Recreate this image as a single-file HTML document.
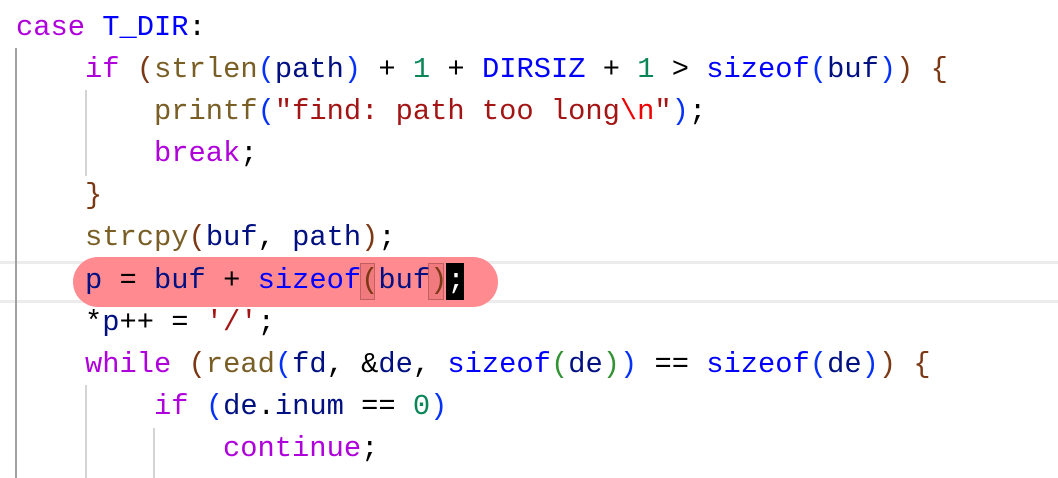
<!DOCTYPE html>
<html><head><meta charset="utf-8"><style>
html,body{margin:0;padding:0;background:#fff;width:1058px;height:478px;overflow:hidden;position:relative}
.l{position:absolute;left:16px;white-space:pre;font-family:"Liberation Mono",monospace;font-size:28.75px;line-height:42px;height:42px;color:#000;margin-top:2px}
.k{color:#af00db}.m{color:#0000ff}.f{color:#795e26}.v{color:#001080}.n{color:#098658}.s{color:#a31515}.e{color:#ee0000}
.b1{color:#7b3814}.b2{color:#0431fa}.b3{color:#319331}
.g{position:absolute;width:2px}
</style></head><body>
<div style="position:absolute;left:0;top:261px;width:1058px;height:3px;background:#ececec"></div>
<div style="position:absolute;left:0;top:300px;width:1058px;height:3px;background:#ececec"></div>
<div style="position:absolute;left:73px;top:257px;width:425px;height:50px;border-radius:25px;background:#ff8a90"></div>
<div style="position:absolute;left:360px;top:263px;width:15px;height:37px;border:1px solid #c06060;box-sizing:border-box;background:#f07a7e"></div>
<div style="position:absolute;left:428px;top:263px;width:16px;height:37px;border:1px solid #c06060;box-sizing:border-box;background:#f07a7e"></div>
<div style="position:absolute;left:446px;top:263px;width:18px;height:37px;background:#000"></div>
<div class="g" style="left:15px;top:48px;height:430px;background:#a0a0a0"></div>
<div class="g" style="left:85px;top:90px;height:86px;background:#d4d4d4"></div>
<div class="g" style="left:85px;top:385px;height:93px;background:#d4d4d4"></div>
<div class="g" style="left:153px;top:428px;height:50px;background:#d4d4d4"></div>
<div class="l" style="top:5px"><span class="k">case</span> <span class="m">T_DIR</span>:</div>
<div class="l" style="top:47px">    <span class="k">if</span> <span class="b1">(</span><span class="f">strlen</span><span class="b2">(</span><span class="v">path</span><span class="b2">)</span> + <span class="n">1</span> + <span class="m">DIRSIZ</span> + <span class="n">1</span> &gt; <span class="m">sizeof</span><span class="b2">(</span><span class="v">buf</span><span class="b2">)</span><span class="b1">)</span> <span class="b1">{</span></div>
<div class="l" style="top:89px">        <span class="f">printf</span><span class="b2">(</span><span class="s">"find: path too long</span><span class="e">\n</span><span class="s">"</span><span class="b2">)</span>;</div>
<div class="l" style="top:131px">        <span class="k">break</span>;</div>
<div class="l" style="top:173px">    <span class="b1">}</span></div>
<div class="l" style="top:215px">    <span class="f">strcpy</span><span class="b1">(</span><span class="v">buf</span>, <span class="v">path</span><span class="b1">)</span>;</div>
<div class="l" style="top:258px">    <span class="v">p</span> = <span class="v">buf</span> + <span class="m">sizeof</span><span class="b1">(</span><span class="v">buf</span><span class="b1">)</span><span style="color:#fff">;</span></div>
<div class="l" style="top:300px">    *<span class="v">p</span>++ = <span class="s">'/'</span>;</div>
<div class="l" style="top:342px">    <span class="k">while</span> <span class="b1">(</span><span class="f">read</span><span class="b2">(</span><span class="v">fd</span>, &amp;<span class="v">de</span>, <span class="m">sizeof</span><span class="b3">(</span><span class="v">de</span><span class="b3">)</span><span class="b2">)</span> == <span class="m">sizeof</span><span class="b2">(</span><span class="v">de</span><span class="b2">)</span><span class="b1">)</span> <span class="b1">{</span></div>
<div class="l" style="top:384px">        <span class="k">if</span> <span class="b2">(</span><span class="v">de</span>.<span class="v">inum</span> == <span class="n">0</span><span class="b2">)</span></div>
<div class="l" style="top:426px">            <span class="k">continue</span>;</div>
</body></html>
